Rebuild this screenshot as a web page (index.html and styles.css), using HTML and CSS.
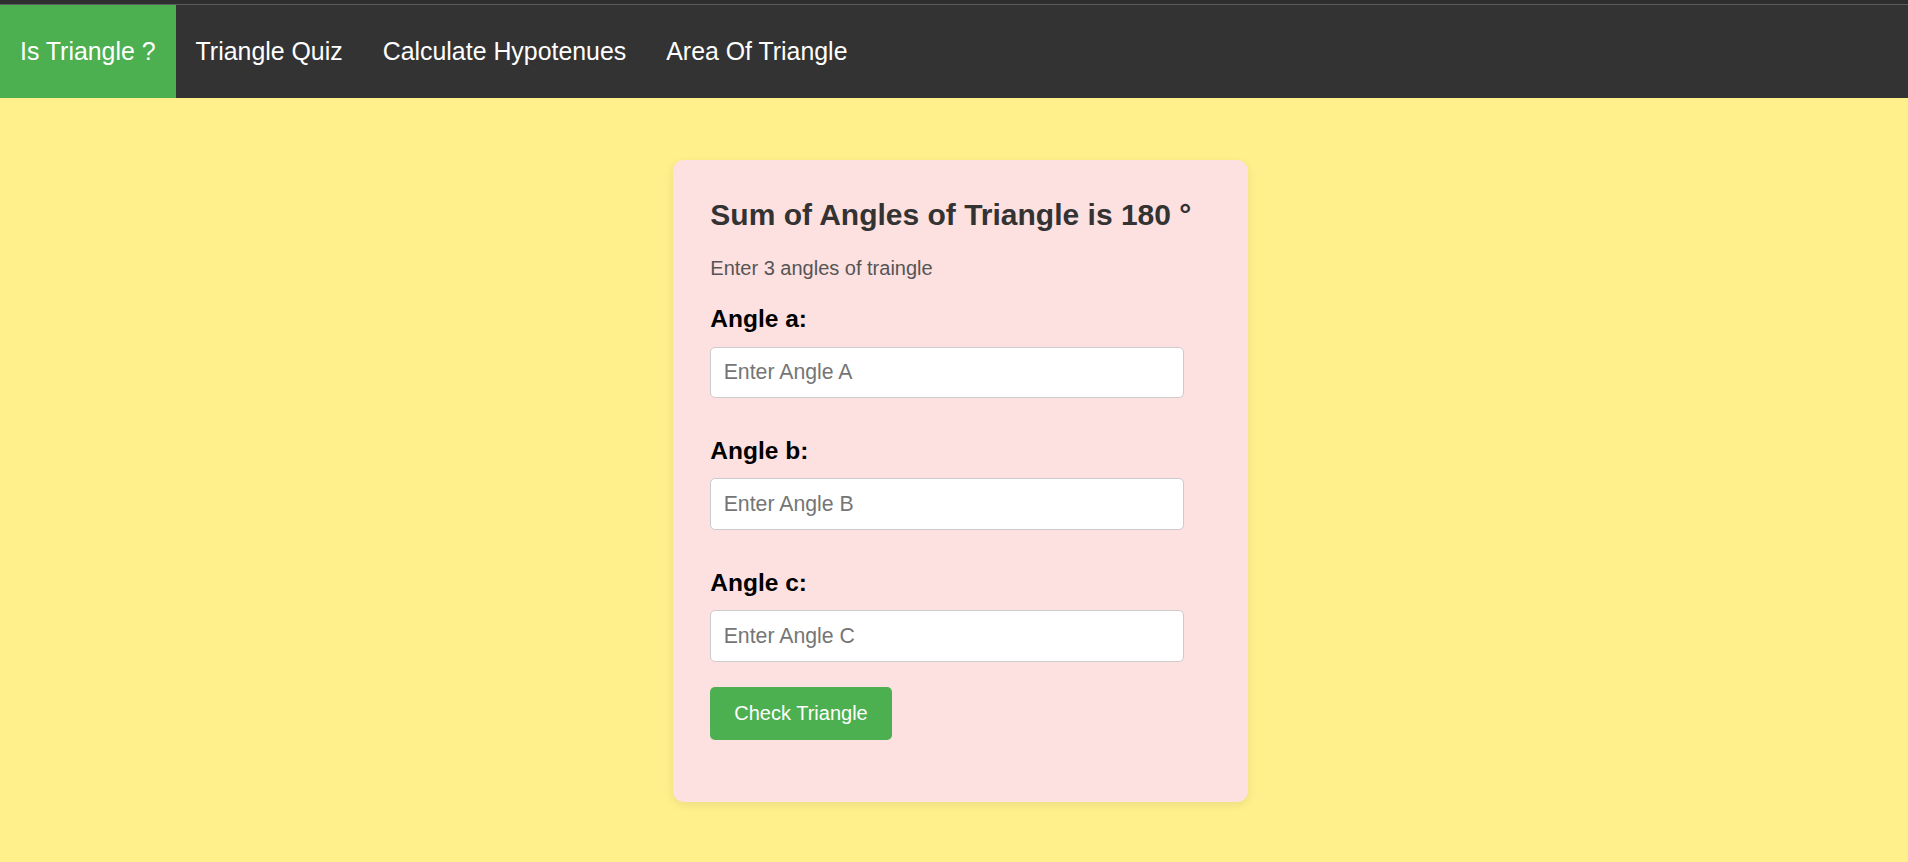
FILE: index.html
```html
<!DOCTYPE html>
<html lang="en">
<head>
<meta charset="utf-8">
<title>Is Triangle ?</title>
<link rel="stylesheet" href="styles.css">
</head>
<body>
<div class="topstrip"></div>
<nav class="navbar">
  <a class="nav-link active" href="#">Is Triangle ?</a>
  <a class="nav-link" href="#">Triangle Quiz</a>
  <a class="nav-link" href="#">Calculate Hypotenues</a>
  <a class="nav-link" href="#">Area Of Triangle</a>
</nav>
<main class="main">
  <section class="card">
    <h2 class="card-title">Sum of Angles of Triangle is 180 °</h2>
    <p class="card-sub">Enter 3 angles of traingle</p>
    <div class="field">
      <label class="field-label" for="a">Angle a:</label>
      <input class="field-input" id="a" type="number" placeholder="Enter Angle A">
    </div>
    <div class="field">
      <label class="field-label" for="b">Angle b:</label>
      <input class="field-input" id="b" type="number" placeholder="Enter Angle B">
    </div>
    <div class="field">
      <label class="field-label" for="c">Angle c:</label>
      <input class="field-input" id="c" type="number" placeholder="Enter Angle C">
    </div>
    <button class="btn" type="button">Check Triangle</button>
  </section>
</main>
</body>
</html>
```

FILE: styles.css
```css
* { box-sizing: border-box; }

html, body {
  margin: 0;
  padding: 0;
}

body {
  font-family: "Liberation Sans", Arial, sans-serif;
  background: #fff08b;
  min-height: 862px;
}

.topstrip {
  height: 5px;
  background: #2e2e2e;
  border-bottom: 1px solid #5c5c5c;
}

.navbar {
  display: flex;
  background: #333333;
  height: 92.7px;
}

.nav-link {
  display: block;
  padding: 0 20px;
  line-height: 92.7px;
  font-size: 24.9px;
  color: #ffffff;
  text-decoration: none;
}

.nav-link.active {
  background: #4caf50;
}

.main {
  display: flex;
  justify-content: center;
  padding: 62.3px 0 0 13px;
}

.card {
  width: 575px;
  background: #fde0e0;
  border-radius: 11px;
  box-shadow: 0 3px 10px rgba(0, 0, 0, 0.08);
  padding: 37px 37.3px 62.6px;
}

.card-title {
  margin: 0;
  font-size: 30px;
  line-height: 36px;
  font-weight: bold;
  color: #333333;
}

.card-sub {
  margin: 23px 0 0;
  font-size: 20px;
  line-height: 24px;
  color: #555555;
}

.field {
  margin-top: 24px;
}

.field + .field {
  margin-top: 37.5px;
}

.field-label {
  display: block;
  font-size: 24.5px;
  line-height: 30px;
  font-weight: bold;
  color: #000000;
}

.field-input {
  display: block;
  margin-top: 12.7px;
  width: 473.7px;
  height: 51.6px;
  padding: 0 12.4px;
  border: 1px solid #cccccc;
  border-radius: 5px;
  background: #ffffff;
  font-family: "Liberation Sans", Arial, sans-serif;
  font-size: 21.25px;
  color: #333333;
  outline: none;
  -moz-appearance: textfield;
}

.field-input::-webkit-outer-spin-button,
.field-input::-webkit-inner-spin-button {
  -webkit-appearance: none;
  margin: 0;
}

.field-input::placeholder {
  color: #757575;
}

.btn {
  display: block;
  margin-top: 25.4px;
  height: 52.4px;
  padding: 0 24px;
  border: none;
  border-radius: 5px;
  background: #4caf50;
  color: #ffffff;
  font-family: "Liberation Sans", Arial, sans-serif;
  font-size: 20px;
  cursor: pointer;
}
```
